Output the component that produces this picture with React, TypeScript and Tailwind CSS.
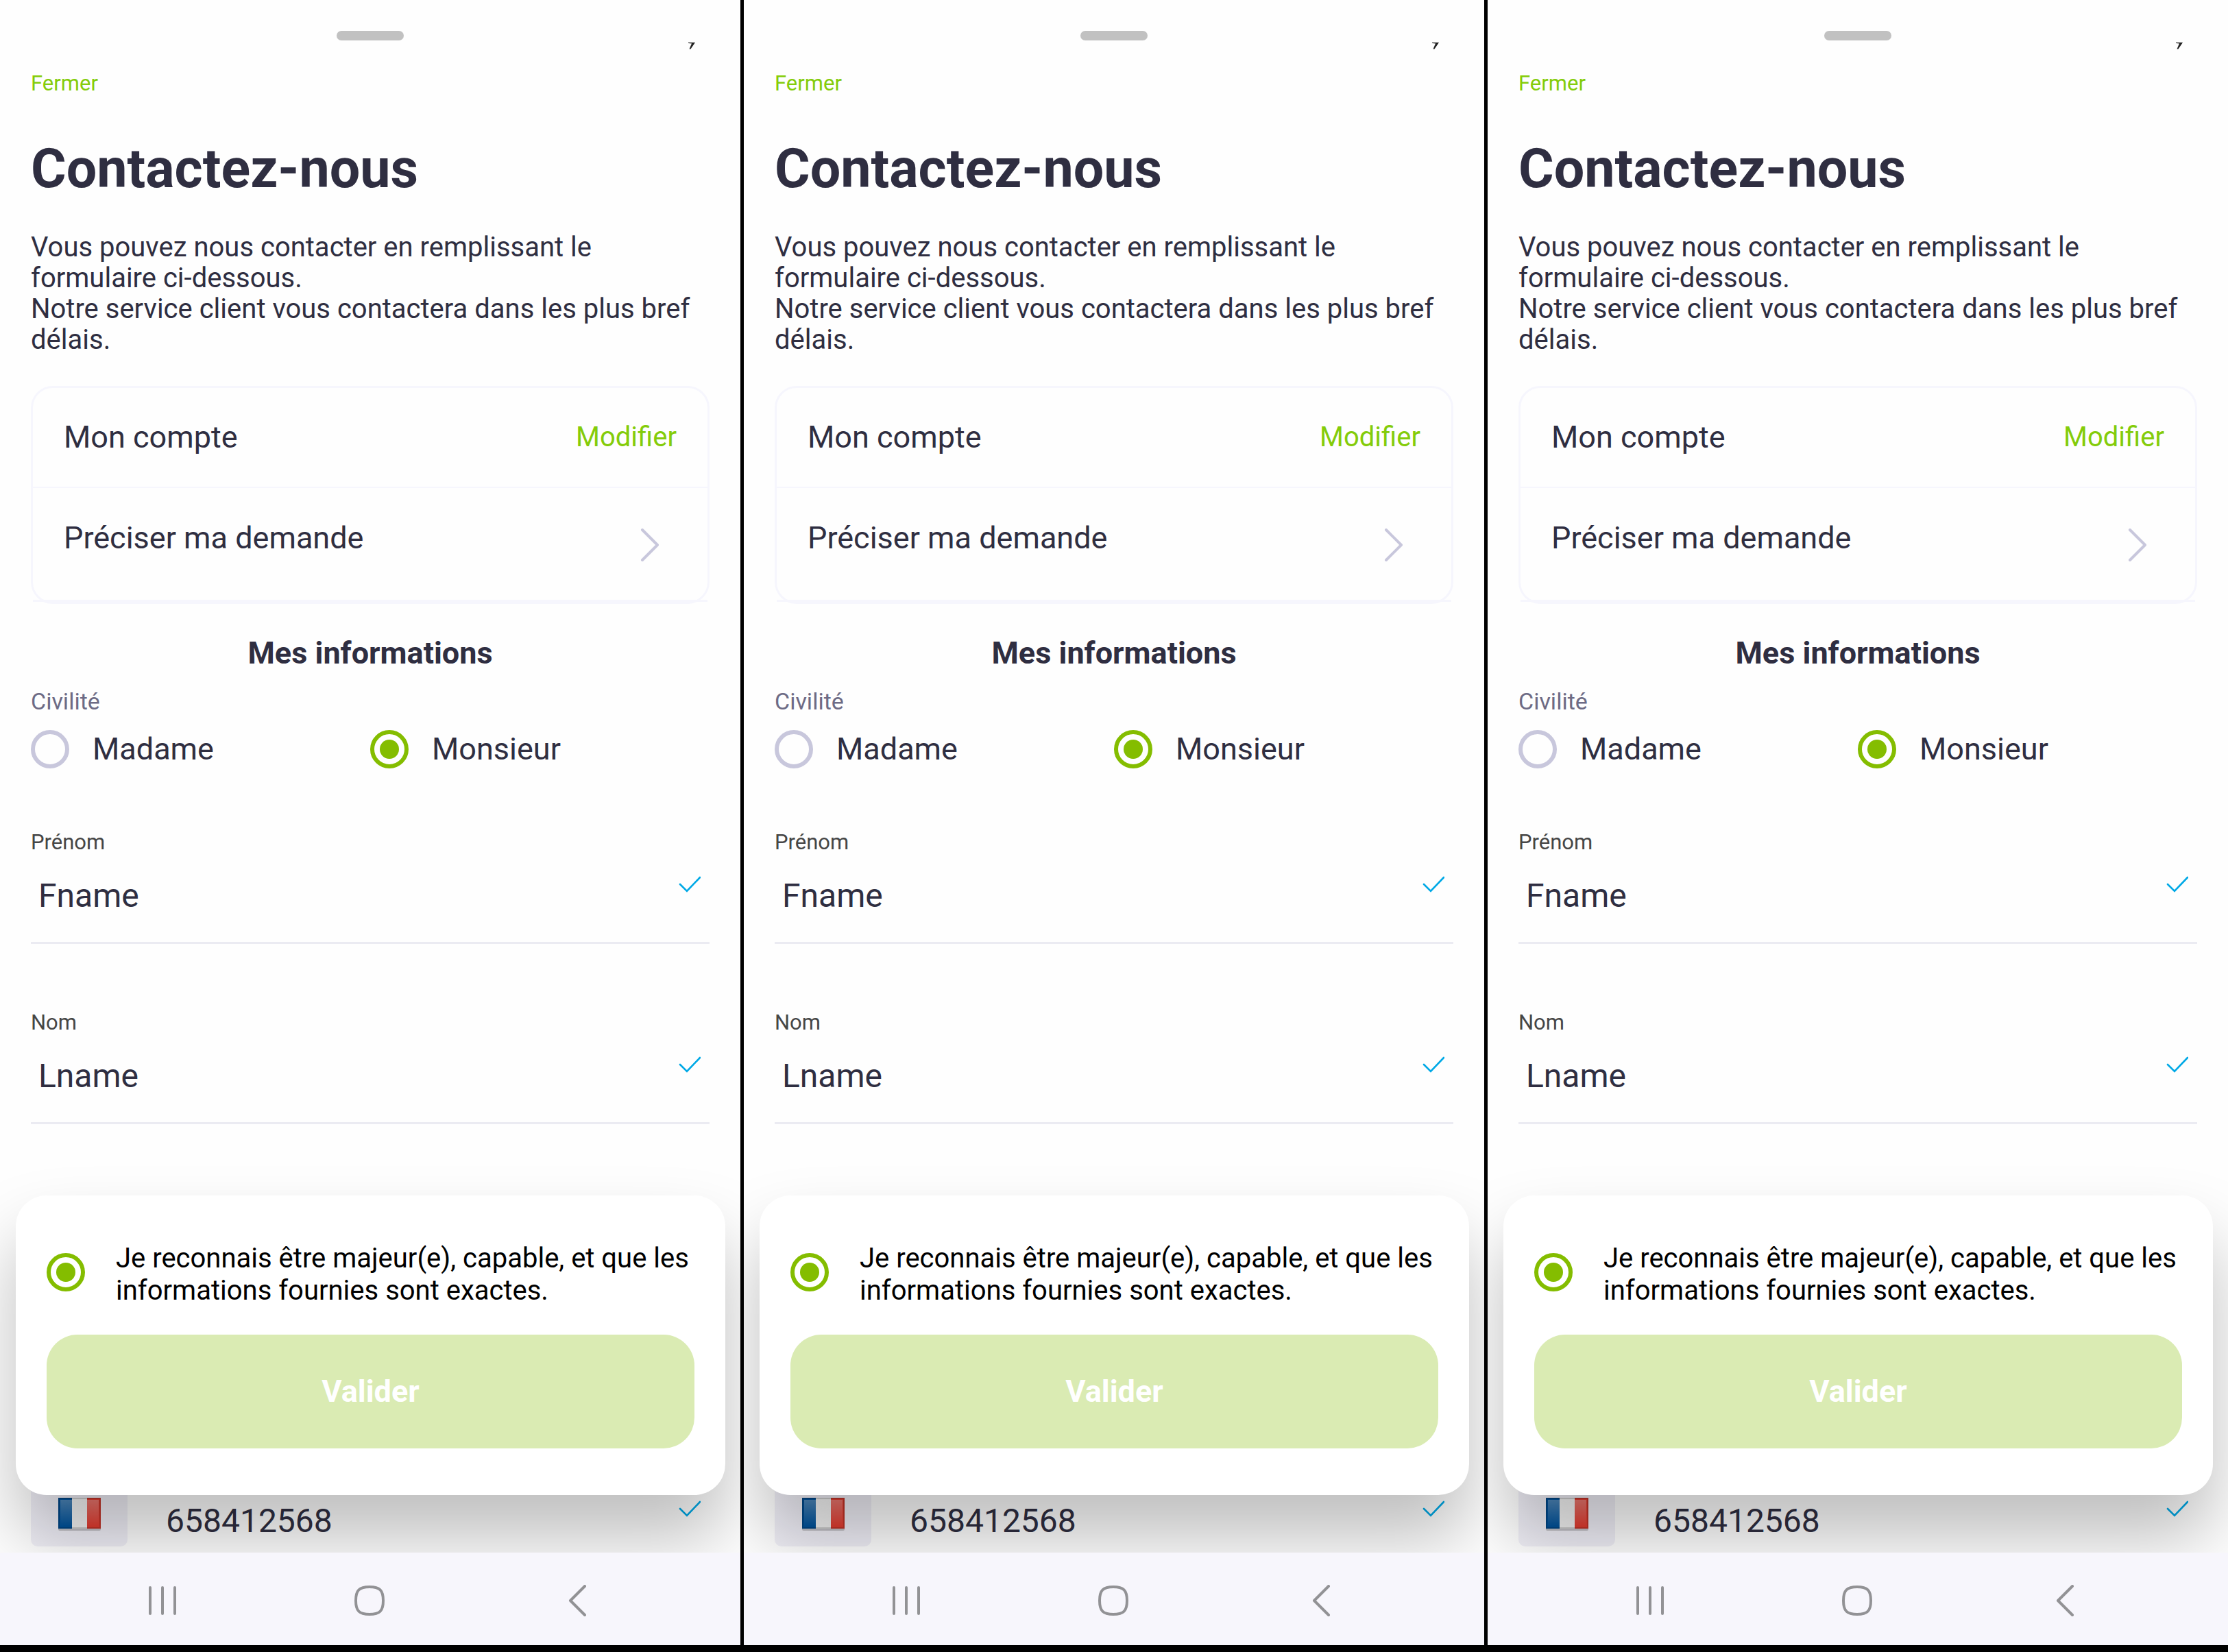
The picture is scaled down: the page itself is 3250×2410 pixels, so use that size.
import type { ReactNode } from "react";

function Radio({ name, label, id, checked, className, children }: { name: string; label?: string; id: string; checked?: boolean; className: string; children?: ReactNode }) {
  return (
    <label htmlFor={id} className={className}>
      <input
        id={id}
        type="radio"
        name={name}
        defaultChecked={checked}
        className="grid size-14 shrink-0 appearance-none place-items-center rounded-full border-6 border-[#c8c7dc] before:size-7 before:rounded-full checked:border-[#84bd00] checked:before:bg-[#84bd00]"
      />
      {label ?? children}
    </label>
  );
}

function Tick() {
  return (
    <svg viewBox="0 0 32 24" className="h-6 w-8 shrink-0" fill="none" stroke="#00a9e6" strokeWidth="2.6" strokeLinecap="round" aria-hidden="true">
      <path d="M2 12 L12 22 L31 2" />
    </svg>
  );
}

function Field({ id, label, value }: { id: string; label: string; value: string }) {
  return (
    <div className="mb-[97px] border-b-3 border-[#ebebf2]">
      <label htmlFor={id} className="block text-[31px] leading-9 text-[#464646]">
        {label}
      </label>
      <div className="flex items-start">
        <input id={id} defaultValue={value} className="mt-3.5 h-[113px] min-w-0 flex-1 pb-[22px] pl-[11px] text-[48px] text-[#2f2e41] outline-none" />
        <div className="mt-[31px] mr-[13px]">
          <Tick />
        </div>
      </div>
    </div>
  );
}

function Flag() {
  return (
    <svg viewBox="0 0 64 52" className="mt-[62px] h-[52px] w-16" role="img" aria-label="France">
      <defs>
        <linearGradient id="flag-shine" x1="0" y1="0" x2="0" y2="1">
          <stop offset="0" stopColor="#fff" stopOpacity="0.3" />
          <stop offset="1" stopColor="#fff" stopOpacity="0" />
        </linearGradient>
      </defs>
      <rect x="1" y="3" width="62" height="46" rx="2" fill="#000" opacity="0.2" />
      <rect x="1" y="1" width="20" height="45" fill="#00529b" />
      <rect x="21" y="1" width="22" height="45" fill="#f2f2f2" />
      <rect x="43" y="1" width="20" height="45" fill="#e23c30" />
      <rect x="4" y="4" width="56" height="39" fill="url(#flag-shine)" />
      <rect x="2" y="2" width="60" height="43" fill="none" stroke="#000" strokeOpacity="0.15" strokeWidth="2" />
    </svg>
  );
}

function Phone({ index }: { index: number }) {
  const id = (name: string) => `${name}-${index}`;
  return (
    <section className="flex min-w-0 flex-col bg-[#fefefe]">
      <div className="relative overflow-hidden px-[45px] pb-[9px]">
        <div className="flex h-[90px] items-start justify-center pt-[45px]">
          <div className="h-3.5 w-[98px] rounded-full bg-[#c1c1c1]" />
        </div>
        <svg viewBox="0 0 12 10" className="absolute top-[62px] right-[65px] h-2.5 w-3" aria-hidden="true">
          <path d="M1 0 H11 L4.500 9.500 L2.500 9.500 L6 1.500 L1 1 Z" fill="#222" />
        </svg>
        <button type="button" className="mt-3.5 block text-[31px] leading-9 text-[#84cc0a]">
          Fermer
        </button>
        <h1 className="mt-[58px] text-[79px] leading-24 font-bold text-[#2f2e41]">Contactez-nous</h1>
        <p className="mt-11 text-[40px] leading-[45px] text-[#2f2e41]">
          Vous pouvez nous contacter en remplissant le formulaire ci-dessous.
          <br />
          Notre service client vous contactera dans les plus bref délais.
        </p>

        <div className="mt-[45px] rounded-[32px] border-3 border-[#f6f6fd]">
          <div className="flex h-[146px] items-center justify-between border-b-2 border-[#f6f6fd] px-[45px] text-[45px] leading-[52px] text-[#2f2e41]">
            <span>Mon compte</span>
            <a href="#compte" className="text-[40px] text-[#84cc0a]">
              Modifier
            </a>
          </div>
          <button type="button" className="flex h-[166px] w-full items-start justify-between border-b-3 border-[#f6f6fd] pt-[47px] pr-[70px] pl-[45px] text-left text-[45px] leading-[52px] text-[#2f2e41]">
            Préciser ma demande
            <svg viewBox="0 0 28 48" className="mt-3 h-12 w-7" fill="none" stroke="#c8c7dc" strokeWidth="4" strokeLinecap="round" strokeLinejoin="round" aria-hidden="true">
              <path d="M3 2 L25 24 L3 46" />
            </svg>
          </button>
        </div>

        <h2 className="mt-[46px] text-center text-[45px] leading-[52px] font-bold text-[#2f2e41]">Mes informations</h2>

        <fieldset className="mt-6">
          <legend className="text-[34px] leading-10 text-[#6d6b85]">Civilité</legend>
          <div className="mt-[22px] grid grid-cols-2 text-[45px] leading-[52px] text-[#2f2e41]">
            <Radio id={id("madame")} name={id("civilite")} label="Madame" className="flex items-center gap-[34px]" />
            <Radio id={id("monsieur")} name={id("civilite")} label="Monsieur" checked className="flex items-center gap-[34px]" />
          </div>
        </fieldset>

        <div className="mt-[90px]">
          <Field id={id("prenom")} label="Prénom" value="Fname" />
          <Field id={id("nom")} label="Nom" value="Lname" />
        </div>

        <div className="mt-[482px] flex items-start">
          <button type="button" className="flex h-[134px] w-[141px] shrink-0 justify-center rounded-[10px] bg-[#f0eff7]">
            <Flag />
          </button>
          <input
            id={id("tel")}
            type="tel"
            aria-label="Téléphone"
            defaultValue="658412568"
            className="mt-[58px] ml-[56px] h-[76px] min-w-0 flex-1 text-[48px] text-[#2f2e41] outline-none"
          />
          <div className="mt-[67px] mr-[13px]">
            <Tick />
          </div>
        </div>

        <div className="absolute right-[22px] bottom-[84px] left-[23px] rounded-[45px] bg-white px-[45px] pt-[62px] pb-[68px] shadow-[0_62px_100px_rgba(0,0,0,0.25)]">
          <Radio id={id("majeur")} name={id("majeur")} checked className="flex items-center gap-[45px] text-[40px] leading-[47px] text-black">
            <span className="pt-1.5">Je reconnais être majeur(e), capable, et que les informations fournies sont exactes.</span>
          </Radio>
          <button type="button" className="mt-[41px] h-[166px] w-full rounded-[45px] bg-[#daebb3] text-[45px] font-bold text-white">
            Valider
          </button>
        </div>
      </div>

      <nav className="grid h-[135px] grid-cols-3 place-items-center bg-[#f7f6fc] px-[85px] pt-1">
        <button type="button" aria-label="Applications récentes">
          <svg viewBox="0 0 44 46" className="h-[46px] w-11" fill="none" stroke="#929295" strokeWidth="4" strokeLinecap="round">
            <path d="M4 4 V42 M22 4 V42 M40 4 V42" />
          </svg>
        </button>
        <button type="button" aria-label="Accueil">
          <svg viewBox="0 0 46 46" className="size-[46px]" fill="none" stroke="#929295" strokeWidth="4">
            <path d="M22 3 C37 3 42 8 42 23 C42 38 37 43 22 43 C7 43 2 38 2 23 C2 8 7 3 22 3 Z" />
          </svg>
        </button>
        <button type="button" aria-label="Retour">
          <svg viewBox="0 0 38 46" className="h-[46px] w-[38px]" fill="none" stroke="#929295" strokeWidth="4" strokeLinecap="round" strokeLinejoin="round">
            <path d="M29 2 L8 23 L29 44" />
          </svg>
        </button>
      </nav>
    </section>
  );
}

export default function App() {
  return (
    <main className="grid grid-cols-3 gap-[5px] bg-black pb-2.5 font-[Roboto,sans-serif]">
      {[0, 1, 2].map((index) => (
        <Phone key={index} index={index} />
      ))}
    </main>
  );
}
